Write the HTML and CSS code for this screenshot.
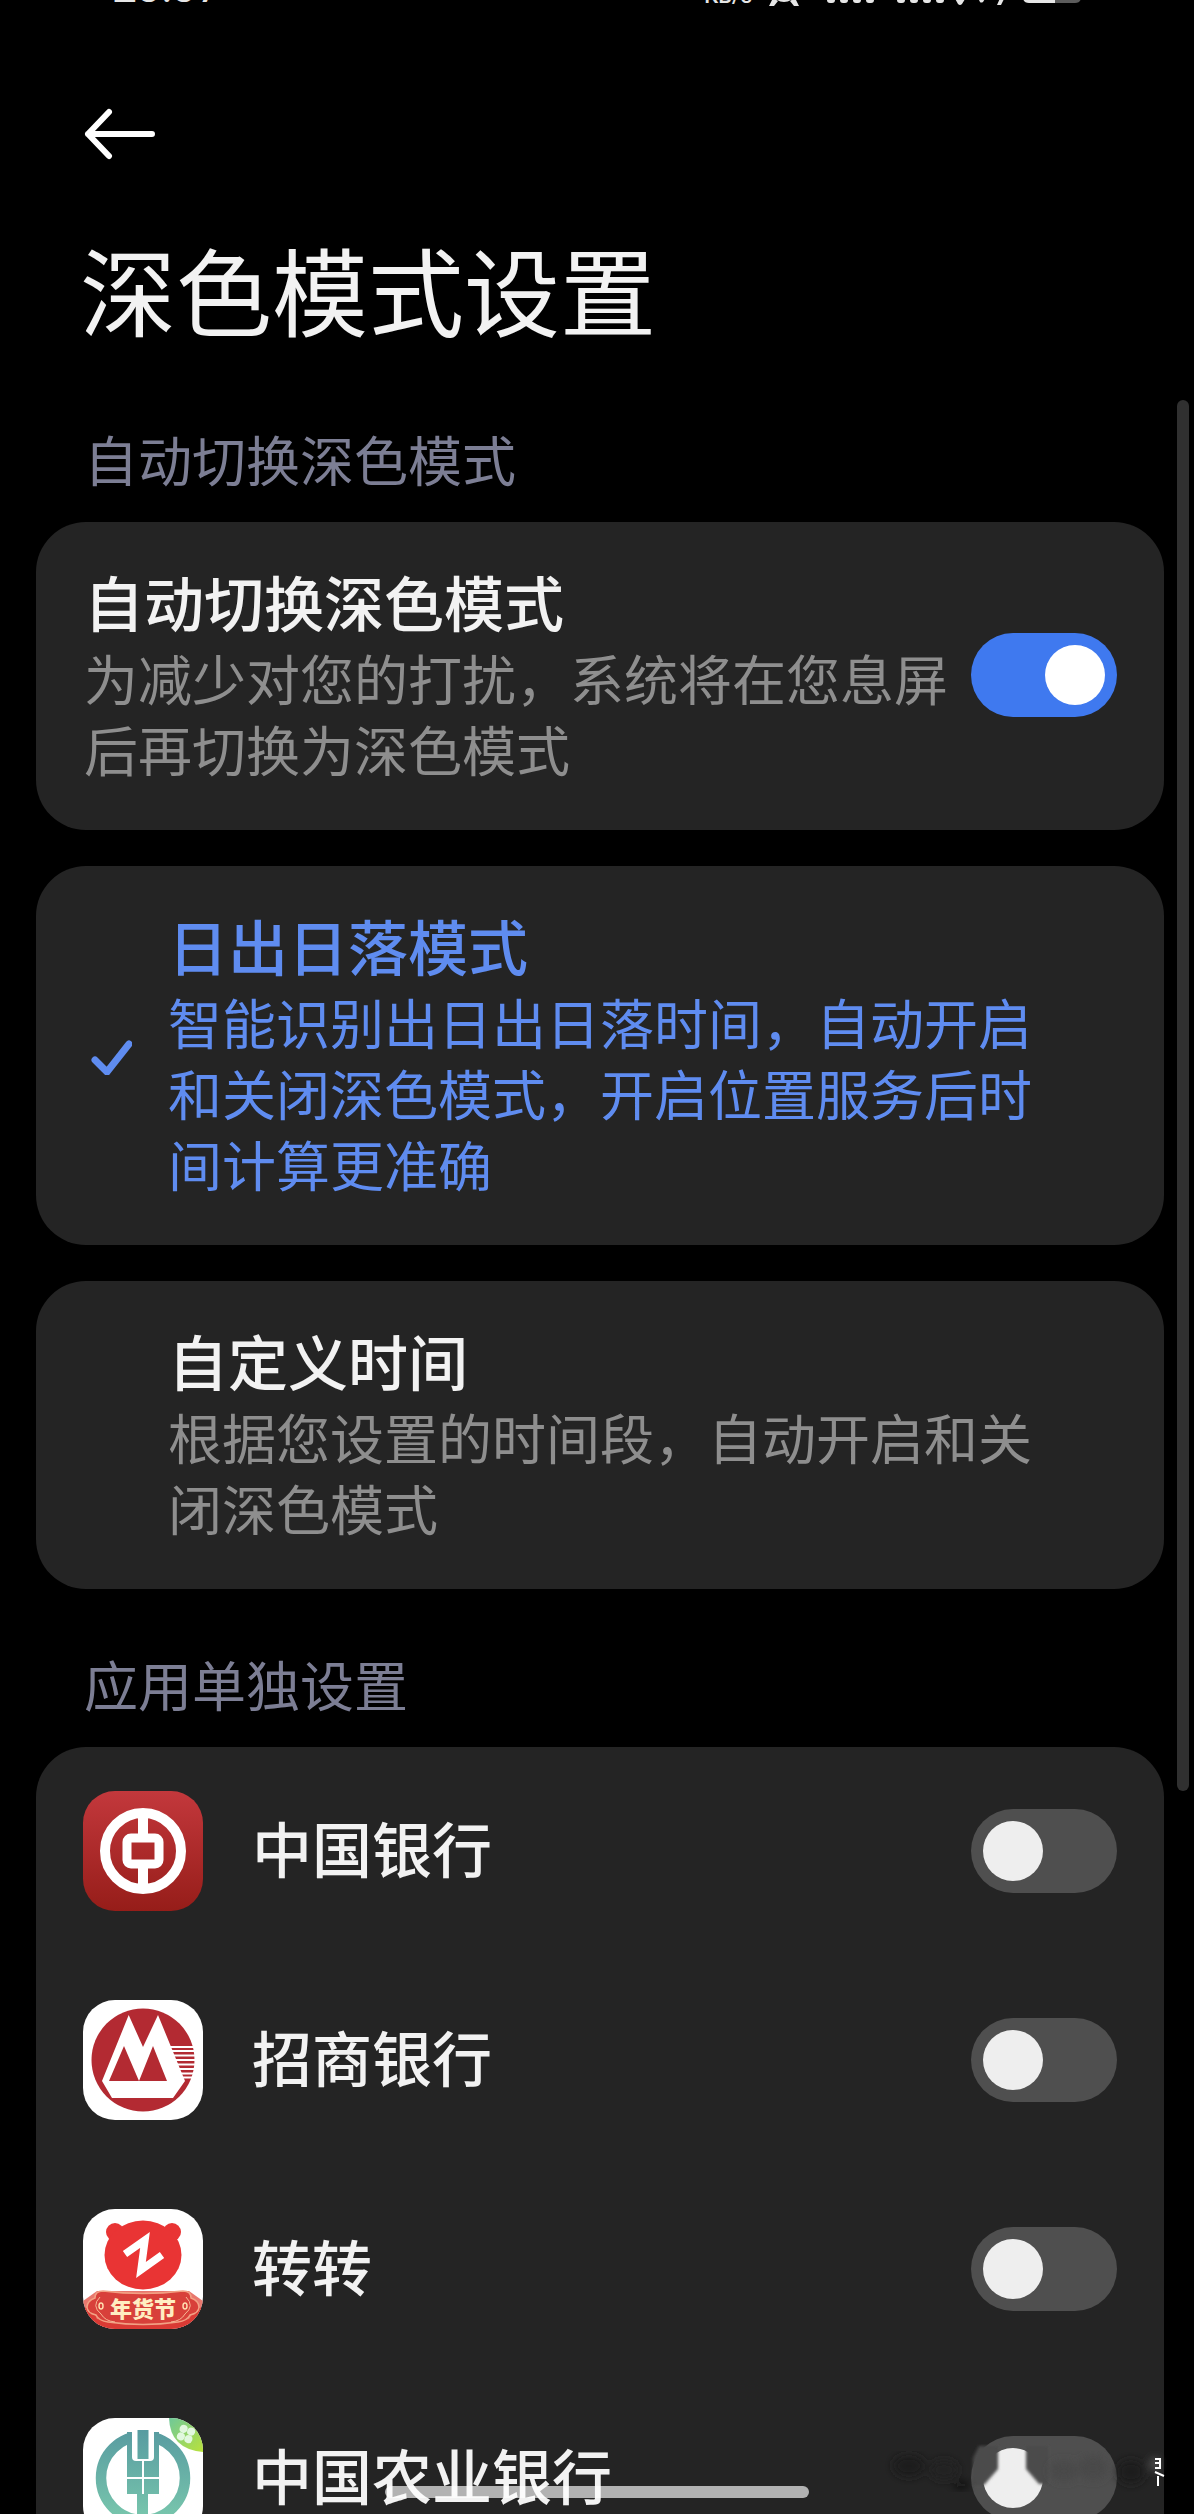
FILE: index.html
```html
<!DOCTYPE html>
<html lang="zh-CN">
<head>
    <meta charset="UTF-8">
    <meta name="viewport" content="width=device-width, initial-scale=1.0">
    <title>深色模式设置</title>
    <link rel="stylesheet" href="styles.css">
</head>
<body>
    <div class="screen">
        <!-- 状态栏 -->
        <div class="status-bar">
            <span class="time">23:37</span>
            <span class="speed">KB/s</span>
            <svg class="status-icons" viewBox="0 0 314 40" aria-hidden="true">
                <g fill="#e6e6e6">
                    <circle cx="16" cy="23" r="13"/>
                    <path d="M5 32l5 3-4 5H1zM27 32l-5 3 4 5h5z"/>
                    <rect x="59" y="26" width="8" height="11" rx="3"/>
                    <rect x="72" y="20" width="8" height="17" rx="3"/>
                    <rect x="85" y="14" width="8" height="23" rx="3"/>
                    <rect x="98" y="8" width="8" height="29" rx="3"/>
                    <rect x="129" y="26" width="8" height="11" rx="3"/>
                    <rect x="142" y="20" width="8" height="17" rx="3"/>
                    <rect x="155" y="14" width="8" height="23" rx="3"/>
                    <rect x="168" y="8" width="8" height="29" rx="3"/>
                    <path d="M180 20h25l-11 18q-2 2-4 0zM208 28h12l-5 8q-2 1-3 0zM233 30l4 1-4 8h-4z"/>
                    <path d="M287 8v29h-26q-6 0-6-6V14q0-6 6-6z"/>
                </g>
                <path fill="#5c5c5c" d="M287 8v29h20q6 0 6-6V14q0-6-6-6z"/>
            </svg>
        </div>

        <header class="header">
            <button type="button" class="back" aria-label="返回">
                <svg viewBox="0 0 72 60" aria-hidden="true">
                    <path d="M68 30H4M25 8L4 30l21 22" fill="none" stroke="#fff" stroke-width="6" stroke-linecap="round" stroke-linejoin="round"/>
                </svg>
            </button>
            <h1>深色模式设置</h1>
        </header>

        <main>
            <h2>自动切换深色模式</h2>
            <section class="cards">
                <label class="card">
                    <span class="text">
                        <span class="name">自动切换深色模式</span>
                        <span class="desc">为减少对您的打扰，系统将在您息屏后再切换为深色模式</span>
                    </span>
                    <input type="checkbox" class="switch" checked>
                </label>
                <label class="card mode">
                    <input type="radio" name="mode" checked>
                    <svg class="check" viewBox="0 0 48 40" aria-hidden="true">
                        <path d="M11 25l12 12L45 9" fill="none" stroke="#5f8cf0" stroke-width="7" stroke-linecap="round"/>
                    </svg>
                    <span class="text">
                        <span class="name">日出日落模式</span>
                        <span class="desc">智能识别出日出日落时间，自动开启和关闭深色模式，开启位置服务后时间计算更准确</span>
                    </span>
                </label>
                <label class="card mode">
                    <input type="radio" name="mode">
                    <svg class="check" viewBox="0 0 48 40" aria-hidden="true">
                        <path d="M11 25l12 12L45 9" fill="none" stroke="#5f8cf0" stroke-width="7" stroke-linecap="round"/>
                    </svg>
                    <span class="text">
                        <span class="name">自定义时间</span>
                        <span class="desc">根据您设置的时间段，自动开启和关闭深色模式</span>
                    </span>
                </label>
            </section>

            <h2>应用单独设置</h2>
            <section class="apps">
                <label class="app">
                    <svg class="icon" viewBox="0 0 120 120" aria-hidden="true">
                        <defs>
                            <linearGradient id="boc" x1="0" y1="0" x2="0" y2="1">
                                <stop offset="0" stop-color="#c3383c"/>
                                <stop offset="1" stop-color="#961d19"/>
                            </linearGradient>
                        </defs>
                        <rect width="120" height="120" rx="32" fill="url(#boc)"/>
                        <g fill="none" stroke="#fff">
                            <circle cx="60" cy="60" r="38" stroke-width="10"/>
                            <rect x="44" y="47" width="32" height="26" rx="4" stroke-width="9"/>
                            <path d="M60 20v24M60 76v24" stroke-width="10"/>
                        </g>
                    </svg>
                    <span class="name">中国银行</span>
                    <input type="checkbox" class="switch">
                </label>
                <label class="app">
                    <svg class="icon" viewBox="0 0 120 120" aria-hidden="true">
                        <rect width="120" height="120" rx="32" fill="#fff"/>
                        <circle cx="60" cy="60" r="51.500" fill="#b32a32"/>
                        <path d="M87 47h25M88 51h25M90 55.500h23M92 60h21M94 64.500h19M96 69h17M98 73.500h15M100 77.500h12" stroke="#fff" stroke-width="2"/>
                        <path d="M19 81L45.700 15 60 47 75 15l27 66-12 17H29z" fill="#fff"/>
                        <path d="M26 81l15-35 15 35 14-35 14 35z" fill="#b32a32"/>
                    </svg>
                    <span class="name">招商银行</span>
                    <input type="checkbox" class="switch">
                </label>
                <label class="app">
                    <svg class="icon" viewBox="0 0 120 120" aria-hidden="true">
                        <defs>
                            <clipPath id="tile"><rect width="120" height="120" rx="32"/></clipPath>
                        </defs>
                        <g clip-path="url(#tile)">
                            <rect width="120" height="120" fill="#fff"/>
                            <g fill="#e93434">
                                <circle cx="32" cy="23" r="9"/>
                                <circle cx="89" cy="23" r="9"/>
                                <ellipse cx="60" cy="46" rx="38.500" ry="34.500"/>
                            </g>
                            <path d="M42 45l20-14-4 30 21-15" fill="none" stroke="#fff" stroke-width="7.500" stroke-miterlimit="8"/>
                            <path d="M0 92l14-10h92l14 10v28H0z" fill="#e8786e"/>
                            <path d="M0 98q10 2 14 12 46 10 92 0 6-11 14-12v22H0z" fill="#d93a34"/>
                            <path d="M20 82q40 5 80 0 8 0 8 7 8 3 8 9t-9 8q-3 6-12 7-35 5-70 0-9-1-12-7-9-2-9-8t8-9q0-7 8-7z" fill="#d8403a" stroke="#f2a184" stroke-width="1.500"/>
                            <path d="M17 88q-9 9 1 17 4 7 14 8M103 88q9 9-1 17-4 7-14 8" fill="none" stroke="#f5b795" stroke-width="1"/>
                            <ellipse cx="18" cy="97" rx="2" ry="3" fill="none" stroke="#ffdcae" stroke-width="1.500"/>
                            <ellipse cx="102" cy="97" rx="2" ry="3" fill="none" stroke="#ffdcae" stroke-width="1.500"/>
                            <text class="badge" x="60" y="108" text-anchor="middle">年货节</text>
                        </g>
                    </svg>
                    <span class="name">转转</span>
                    <input type="checkbox" class="switch">
                </label>
                <label class="app">
                    <svg class="icon" viewBox="0 0 120 120" aria-hidden="true">
                        <defs>
                            <linearGradient id="abc" gradientUnits="userSpaceOnUse" x1="0" y1="10" x2="0" y2="110">
                                <stop offset="0" stop-color="#579aa0"/>
                                <stop offset="1" stop-color="#7ccbae"/>
                            </linearGradient>
                            <linearGradient id="leaf" x1="0" y1="0" x2="1" y2="1">
                                <stop offset="0" stop-color="#6fc89a"/>
                                <stop offset="1" stop-color="#b9e23a"/>
                            </linearGradient>
                        </defs>
                        <g clip-path="url(#tile)">
                            <rect width="120" height="120" fill="#fff"/>
                            <circle cx="60" cy="60" r="42" fill="none" stroke="url(#abc)" stroke-width="10.500"/>
                            <path d="M44 14h32v62H65v30H54V76H44z" fill="url(#abc)"/>
                            <path d="M49 0h22v39q0 4-4 4H53q-4 0-4-4z" fill="#fff"/>
                            <path d="M54.500 12h11v29h-11z" fill="url(#abc)"/>
                            <path d="M60 42v34M44 60h32" stroke="#fff" stroke-width="2"/>
                            <path d="M86 0q1 31 34 34V0z" fill="url(#leaf)"/>
                            <g fill="#e2f8df" transform="rotate(20 103 16)">
                                <circle cx="99" cy="12" r="4"/>
                                <circle cx="107" cy="12" r="4"/>
                                <circle cx="99" cy="20" r="4"/>
                                <circle cx="107" cy="20" r="4"/>
                            </g>
                        </g>
                    </svg>
                    <span class="name">中国农业银行</span>
                    <input type="checkbox" class="switch">
                </label>
            </section>
        </main>

        <div class="scrollbar"></div>
        <div class="home-bar"></div>

        <!-- 右下角的模糊痕迹 -->
        <svg class="smudge" viewBox="0 0 320 70" aria-hidden="true">
            <defs>
                <filter id="soft"><feGaussianBlur stdDeviation="4"/></filter>
                <filter id="edge"><feGaussianBlur stdDeviation="1.500"/></filter>
            </defs>
            <g filter="url(#edge)" fill="#4c4c4c">
                <path d="M130 2h19v23l-14 16h-11V14zM177 2h22v38h-9l-13-15z"/>
            </g>
            <g filter="url(#soft)">
                <ellipse cx="60" cy="22" rx="16" ry="11" fill="#1c1c1c"/>
                <ellipse cx="95" cy="26" rx="14" ry="10" fill="#202020"/>
                <ellipse cx="112" cy="41" rx="8" ry="3" fill="#101010"/>
                <ellipse cx="215" cy="27" rx="14" ry="10" fill="#494949"/>
                <ellipse cx="244" cy="24" rx="14" ry="12" fill="#484848"/>
                <ellipse cx="282" cy="28" rx="14" ry="12" fill="#1f1f1f"/>
                <ellipse cx="306" cy="20" rx="4" ry="6" fill="#666"/>
            </g>
            <path d="M306 15h5v9h-5M306 19h5M306 28l9 4M309 32v10" fill="none" stroke="#fff" stroke-width="2"/>
        </svg>
    </div>
</body>
</html>
```
FILE: styles.css
```css
* {
    box-sizing: border-box;
}

body {
    margin: 0;
    background: #000;
    color: #f2f2f2;
    font-family: "Noto Sans CJK SC", sans-serif;
}

.screen {
    position: relative;
    height: 100vh;
    overflow: hidden;
}

.status-bar {
    display: flex;
    align-items: flex-end;
    height: 6px;
    padding: 0 112px;
    overflow: hidden;
    color: #e6e6e6;
    font-family: Roboto, sans-serif;
}

.time {
    flex: 1;
    font-size: 44px;
    line-height: 38px;
}

.speed {
    margin-right: 16px;
    font-size: 22px;
    font-weight: 500;
    line-height: 20px;
}

.status-icons {
    flex: none;
    width: 314px;
    height: 40px;
}

.header {
    padding: 98px 80px 0;
}

.back {
    display: block;
    padding: 0 4px;
    border: none;
    background: none;
    cursor: pointer;
}

.back svg {
    display: block;
    width: 72px;
    height: 60px;
}

h1 {
    margin: 52px 0 4px;
    font-size: 96px;
    font-weight: 400;
    line-height: 144px;
}

main {
    padding: 0 30px 0 36px;
}

h2 {
    margin: 0;
    padding: 60px 48px 28px;
    color: #7c7e94;
    font-size: 54px;
    font-weight: 400;
    line-height: 70px;
}

.cards {
    display: flex;
    flex-direction: column;
    gap: 36px;
}

.card {
    display: flex;
    align-items: center;
    gap: 20px;
    padding: 44px 47px 46px 48px;
    border-radius: 50px;
    background: #242424;
}

.text {
    flex: 1;
}

.name, .desc {
    display: block;
}

.name {
    font-size: 60px;
    font-weight: 500;
    line-height: 70px;
}

.desc {
    margin-top: 6px;
    color: #8e8e8e;
    font-size: 54px;
    line-height: 71px;
}

.mode {
    gap: 36px;
    padding-right: 96px;
}

.mode input {
    position: absolute;
    opacity: 0;
}

.check {
    flex: none;
    width: 48px;
    height: 40px;
    visibility: hidden;
}

.mode input:checked + .check {
    visibility: visible;
}

.mode input:checked ~ .text .name,
.mode input:checked ~ .text .desc {
    color: #5f8cf0;
}

.switch {
    flex: none;
    appearance: none;
    width: 146px;
    height: 84px;
    margin: 0;
    padding: 12px;
    border-radius: 42px;
    background: #4f4f4f;
    cursor: pointer;
}

.switch::before {
    content: "";
    display: block;
    width: 60px;
    height: 60px;
    border-radius: 50%;
    background: #eee;
}

.switch:checked {
    background: #3f79ef;
}

.switch:checked::before {
    margin-left: auto;
    background: #fff;
}

.apps {
    border-radius: 50px 50px 0 0;
    background: #242424;
}

.app {
    display: flex;
    align-items: center;
    gap: 49px;
    height: 209px;
    padding: 0 47px 2px;
}

.app .name {
    flex: 1;
    padding-bottom: 8px;
}

.icon {
    flex: none;
    width: 120px;
    height: 120px;
}

.badge {
    fill: #ffeec2;
    font-size: 22px;
    font-weight: 900;
}

.scrollbar {
    position: absolute;
    top: 400px;
    right: 5px;
    width: 12px;
    height: 1391px;
    border-radius: 6px;
    background: #303030;
}

.home-bar {
    position: absolute;
    bottom: 16px;
    left: 50%;
    width: 424px;
    height: 12px;
    border-radius: 6px;
    background: rgba(255, 255, 255, 0.65);
    transform: translateX(-50%);
}

.smudge {
    position: absolute;
    right: 25px;
    bottom: 0;
    width: 320px;
    height: 70px;
    pointer-events: none;
}
```
